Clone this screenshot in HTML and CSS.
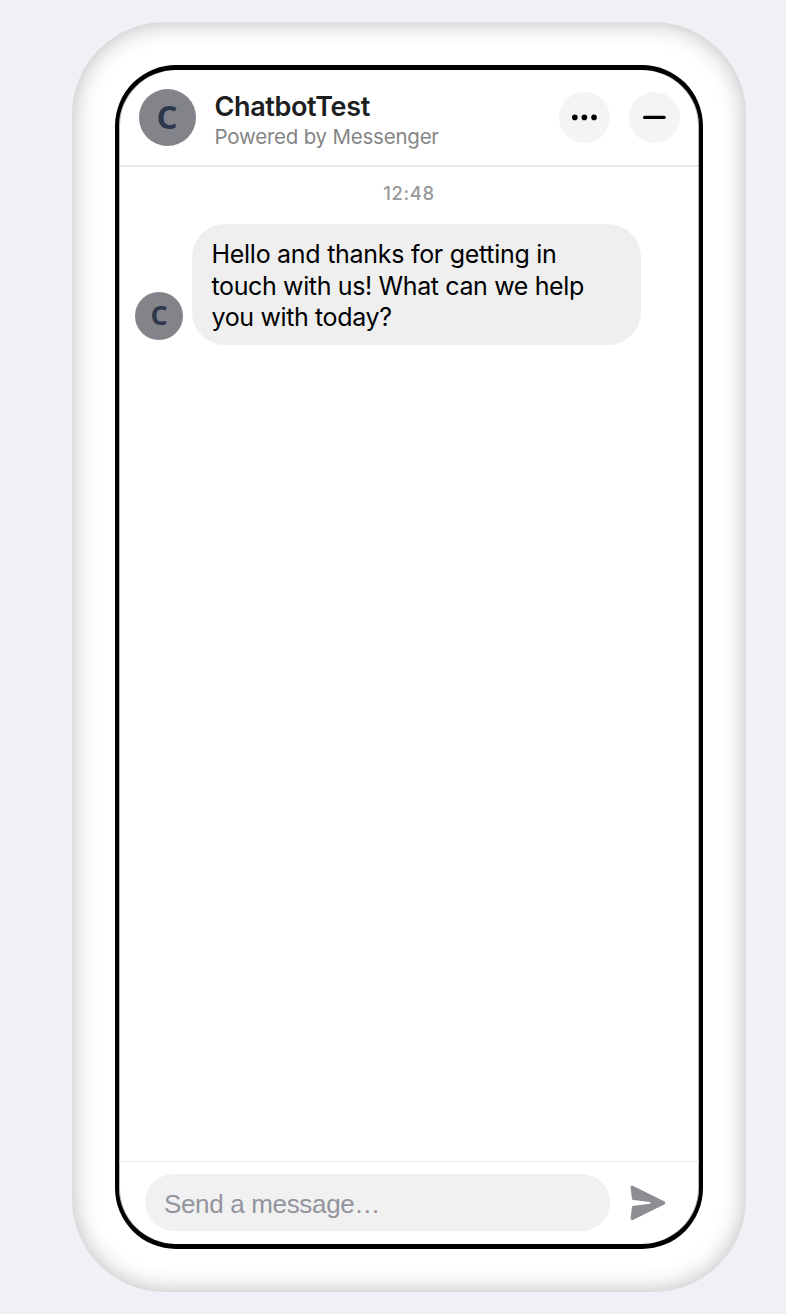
FILE: index.html
```html
<!DOCTYPE html>
<html lang="en">
<head>
<meta charset="utf-8">
<title>ChatbotTest</title>
<link rel="stylesheet" href="styles.css">
</head>
<body>
<main class="phone">
  <section class="screen">
    <header class="header">
      <div class="avatar">C</div>
      <div class="identity">
        <h1 class="name">ChatbotTest</h1>
        <p class="powered">Powered by Messenger</p>
      </div>
      <div class="actions">
        <button class="round" aria-label="More options">
          <svg width="51" height="51" viewBox="0 0 51 51"><circle cx="15.8" cy="25.4" r="2.8"/><circle cx="25.4" cy="25.4" r="2.8"/><circle cx="35" cy="25.4" r="2.8"/></svg>
        </button>
        <button class="round" aria-label="Minimise">
          <svg width="51" height="51" viewBox="0 0 51 51"><path d="M15.600 25.400H35.200" stroke="#000" stroke-width="3.200" stroke-linecap="round"/></svg>
        </button>
      </div>
    </header>
    <div class="messages">
      <time class="time">12:48</time>
      <div class="row">
        <div class="avatar small">C</div>
        <p class="bubble"><span class="l1">Hello and thanks for getting in</span><br>touch with us! What can we help<br>you with today?</p>
      </div>
    </div>
    <footer class="footer">
      <div class="input">Send a message…</div>
      <button class="send" aria-label="Send">
        <svg width="36" height="36" viewBox="0 0 36 36"><path fill="#8d8e93" d="M.6 2.400C.5.800 1.700.400 3.200 1L34.200 16.200C35.700 17 35.700 18.600 34.200 19.400L3.200 34.700C1.600 35.400.400 34.700.600 33L1.900 22.600C2 21.400 2.500 20.900 3.700 20.700L19.600 18.700C21.200 18.500 21.200 17.200 19.600 17L3.700 15.100C2.500 14.900 2 14.400 1.900 13.200Z"/></svg>
      </button>
    </footer>
  </section>
</main>
</body>
</html>
```
FILE: styles.css
```css
* { box-sizing: border-box; }
body {
  margin: 0;
  height: 1314px;
  padding: 22px 40px 22px 72px;
  background: #f0f1f6;
  font-family: Inter, "Liberation Sans", sans-serif;
}
p, h1 { margin: 0; }
button { border: 0; padding: 0; background: none; display: block; }
svg { display: block; }
.phone {
  width: 674px;
  height: 1270px;
  padding: 43px;
  border-radius: 93px;
  background: #fff;
  box-shadow: inset 0 0 24px rgba(0, 0, 0, .28);
}
.screen {
  width: 588px;
  height: 1184px;
  display: flex;
  flex-direction: column;
  border: solid #000;
  border-width: 5px 4px;
  border-radius: 61px;
  background: #fff;
  box-shadow: inset 1px 0 #b5b5b5, inset -1px 0 #b5b5b5;
  overflow: hidden;
}
.header {
  height: 97px;
  display: flex;
  margin: 0 1px;
  padding: 19px 18px 0 18.500px;
  border-bottom: 2px solid #e9e9e9;
}
.avatar {
  width: 57px;
  height: 57px;
  flex: none;
  border-radius: 50%;
  background: #838489;
  color: #2f374b;
  font: 700 33px/55px "Open Sans", sans-serif;
  text-align: center;
}
.avatar.small {
  width: 48px;
  height: 48px;
  margin-bottom: 5px;
  font-size: 27px;
  line-height: 46px;
}
.identity { margin-left: 19px; white-space: nowrap; }
.name {
  font-size: 27px;
  font-weight: 600;
  line-height: 36px;
  letter-spacing: -.380px;
  color: #1c1e21;
}
.powered {
  margin-top: -2px;
  font-size: 20.500px;
  line-height: 27px;
  letter-spacing: -.220px;
  color: #858585;
}
.actions {
  display: flex;
  gap: 19px;
  margin-left: auto;
  padding-top: 3px;
}
.round {
  width: 51px;
  height: 51px;
  border-radius: 50%;
  background: #f4f4f4;
}
.messages { flex: 1; }
.time {
  display: block;
  padding-top: 14px;
  height: 57px;
  text-align: center;
  font-size: 18.500px;
  line-height: 25px;
  font-weight: 500;
  letter-spacing: .600px;
  color: #999;
}
.row {
  display: flex;
  align-items: flex-end;
  gap: 9px;
  padding-left: 16px;
}
.bubble {
  width: 449px;
  height: 121px;
  padding: 15px 19px 0 19.500px;
  border-radius: 33px;
  background: #efefef;
  color: #000;
  font-size: 25px;
  line-height: 31.700px;
  letter-spacing: -.370px;
  white-space: nowrap;
}
.l1 { letter-spacing: -.280px; }
.footer {
  display: flex;
  height: 83px;
  padding: 12px 33px 0 26px;
  border-top: 1px solid #ebebeb;
}
.input {
  flex: none;
  width: 465px;
  height: 57px;
  padding-left: 19px;
  border-radius: 29px;
  background: #f1f1f1;
  color: #92949e;
  font: 26px/60px "Liberation Sans", sans-serif;
  letter-spacing: -.340px;
}
.send { flex: none; margin: 11px 0 0 20px; width: 36px; height: 36px; }
```
